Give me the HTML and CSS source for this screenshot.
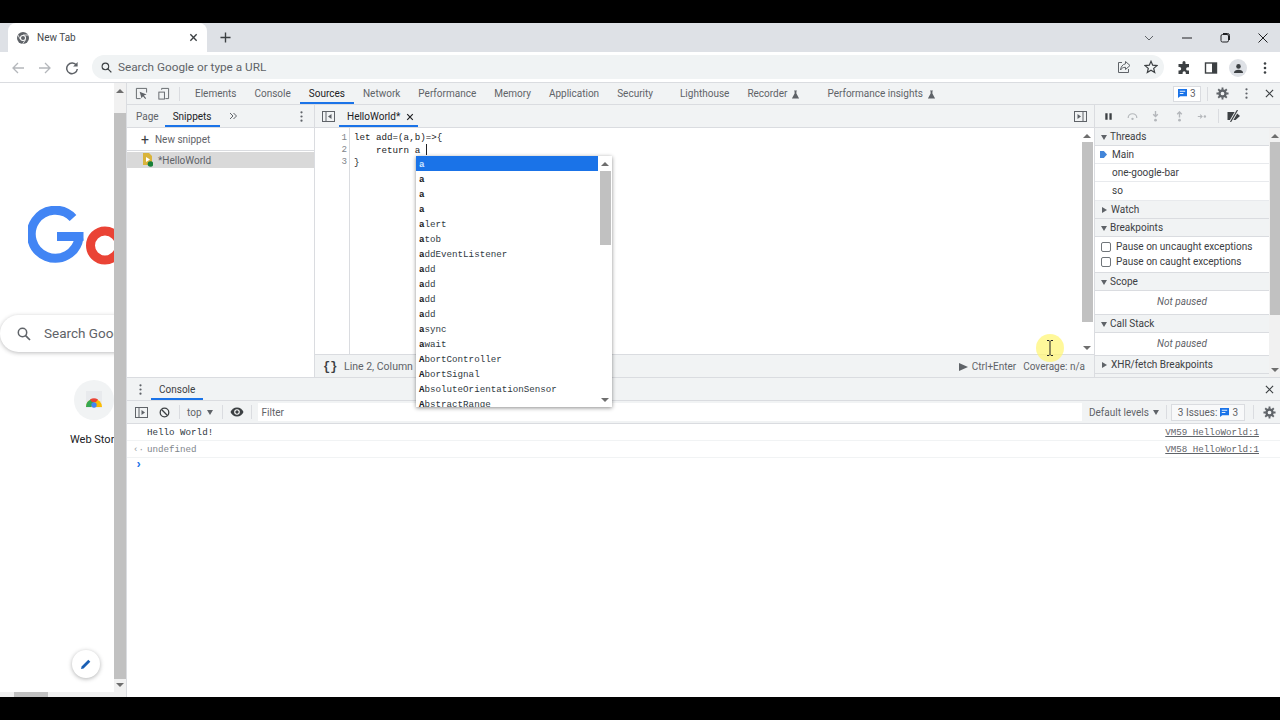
FILE: index.html
```html
<!DOCTYPE html>
<html lang="en">

<head>
  <meta charset="utf-8">
  <title>New Tab</title>
  <link rel="stylesheet" href="styles.css">
</head>

<body>
  <div class="screen">
    <!-- browser chrome -->
    <div class="tabstrip">
      <div class="tab">
        <svg class="favicon" viewBox="0 0 12 12"><circle cx="6" cy="6" r="6" fill="#5f6368"/><circle cx="6" cy="6" r="3" fill="#fff"/><circle cx="6" cy="6" r="2" fill="#5f6368"/><path d="M6 3h5.4M3.4 7.5 .9 3M8.6 7.5 5.6 12" stroke="#fff" stroke-width=".8"/></svg>
        <span class="tab-title">New Tab</span>
        <svg class="tab-close" viewBox="0 0 10 10"><path d="M1.5 1.5l7 7M8.5 1.5l-7 7" stroke="#3c4043" stroke-width="1.5"/></svg>
      </div>
      <svg class="new-tab" viewBox="0 0 12 12"><path d="M6 .5v11M.5 6h11" stroke="#3c4043" stroke-width="1.5"/></svg>
      <div class="win-btns">
        <svg viewBox="0 0 12 12"><path d="M2 4l4 4 4-4" fill="none" stroke="#5f6368"/></svg>
        <svg viewBox="0 0 12 12"><path d="M1 6h10" stroke="#202124"/></svg>
        <svg viewBox="0 0 12 12"><rect x="2" y="2.5" width="7.5" height="7.5" rx="1.5" fill="none" stroke="#202124"/><path d="M4 1.5h4.5a2 2 0 0 1 2 2V8" fill="none" stroke="#202124"/></svg>
        <svg viewBox="0 0 12 12"><path d="M1.5 1.5l9 9M10.5 1.5l-9 9" stroke="#202124"/></svg>
      </div>
    </div>

    <div class="toolbar">
      <svg class="nav-icon" viewBox="0 0 14 14"><path d="M13 7H2M7 2 2 7l5 5" fill="none" stroke="#b4b7bb" stroke-width="1.3"/></svg>
      <svg class="nav-icon" viewBox="0 0 14 14"><path d="M1 7h11M7 2l5 5-5 5" fill="none" stroke="#b4b7bb" stroke-width="1.3"/></svg>
      <svg class="nav-icon" viewBox="0 0 14 14"><path d="M11.5 4.5A5.3 5.3 0 1 0 12.3 8" fill="none" stroke="#5f6368" stroke-width="1.5"/><path d="M12.6 1v4.5H8.1z" fill="#5f6368"/></svg>
      <div class="omnibox">
        <svg class="omni-search" viewBox="0 0 12 12"><circle cx="4.8" cy="4.8" r="3.6" fill="none" stroke="#3c4043" stroke-width="1.2"/><path d="M7.5 7.5l3.8 3.8" stroke="#3c4043" stroke-width="1.4"/></svg>
        <span class="omni-text">Search Google or type a URL</span>
        <svg class="omni-share" viewBox="0 0 14 14"><path d="M5 2.5H1.500v10h10V9" fill="none" stroke="#5f6368"/><path d="M8.5 1.5 13 5.5 8.5 9.5V7.3C6 7.3 4.5 8.3 3.5 10 3.8 7 5.5 4.3 8.5 3.8z" fill="none" stroke="#5f6368"/></svg>
        <svg class="omni-star" viewBox="0 0 14 14"><path d="M7 1.3 8.7 5.200l4.200.4-3.200 2.800 1 4.100L7 10.300 3.300 12.500l1-4.100L1.100 5.600l4.200-.4z" fill="none" stroke="#3c4043" stroke-width="1.2"/></svg>
      </div>
      <div class="browser-actions">
        <svg viewBox="0 0 14 14"><path d="M5.500 1.500a1.500 1.500 0 0 1 3 0V3H12v3.300h-1.300a1.600 1.600 0 0 0 0 3.200H12V13H8.800v-1.200a1.600 1.600 0 0 0-3.200 0V13H1.500V9.500h1a1.700 1.700 0 0 0 0-3.400h-1V3h4z" fill="#3c4043"/></svg>
        <svg viewBox="0 0 14 14"><rect x="1.5" y="2" width="11" height="10" fill="none" stroke="#3c4043" stroke-width="1.4"/><rect x="8" y="2" width="4.5" height="10" fill="#3c4043"/></svg>
        <span class="avatar"><svg viewBox="0 0 12 12"><circle cx="6" cy="3.7" r="2.5" fill="#3c4043"/><path d="M1 11c0-2.600 2.500-3.700 5-3.700S11 8.400 11 11z" fill="#3c4043"/></svg></span>
        <svg viewBox="0 0 14 14"><circle cx="7" cy="2.5" r="1.3" fill="#3c4043"/><circle cx="7" cy="7" r="1.3" fill="#3c4043"/><circle cx="7" cy="11.5" r="1.3" fill="#3c4043"/></svg>
      </div>
    </div>

    <div class="viewport">
      <!-- new tab page, squeezed by devtools -->
      <div class="page">
        <div class="page-body">
          <svg class="google-logo" viewBox="0 0 86 60"><path d="M45 12A24 24 0 1 0 51 32" fill="none" stroke="#4285f4" stroke-width="9"/><rect x="29" y="26" width="26.5" height="9" fill="#4285f4"/><circle cx="77" cy="39.5" r="14.5" fill="none" stroke="#ea4335" stroke-width="9"/></svg>
          <div class="realbox">
            <svg viewBox="0 0 14 14"><circle cx="5.5" cy="5.5" r="4.2" fill="none" stroke="#5f6368" stroke-width="1.5"/><path d="M8.6 8.6l4.4 4.4" stroke="#5f6368" stroke-width="1.7"/></svg>
            <span>Search Google or type a URL</span>
          </div>
          <div class="shortcut">
            <span class="shortcut-icon">
              <svg viewBox="0 0 20 20"><rect x="2" y="1" width="16" height="17" fill="#e8eaed"/><path d="M2 17a8 8 0 0 1 16 0z" fill="#fbbc04"/><path d="M2 17a8 8 0 0 1 5-7.4L10 12l-3 5z" fill="#34a853"/><path d="M6 9.5a8 8 0 0 1 8 0l-2 2.5H8z" fill="#ea4335"/><circle cx="10" cy="15" r="2.7" fill="#4285f4"/></svg>
            </span>
            <span class="shortcut-label">Web Store</span>
          </div>
          <span class="edit-btn"><svg viewBox="0 0 12 12"><path d="M1 11l.6-2.600L8.300 1.700l2 2L3.600 10.400z" fill="#1a5fb4"/></svg></span>
        </div>
        <div class="page-hbar"><span></span></div>
      </div>
      <div class="page-scroll">
        <i class="arrow-up"></i>
        <span class="page-thumb"></span>
        <i class="arrow-down"></i>
      </div>

      <!-- devtools -->
      <div class="devtools">
        <div class="dt-tabs">
          <svg class="dt-icon" viewBox="0 0 14 14"><path d="M6 12.5H1.5v-11h11V6" fill="none" stroke="#5f6368"/><path d="M5 5l7.500 3-3 1.200 2.500 3-1 .8-2.400-3L7 12z" fill="#5f6368"/></svg>
          <svg class="dt-icon" viewBox="0 0 14 14"><path d="M5 3V1.5h7.5v11H9" fill="none" stroke="#5f6368"/><rect x="2" y="5.5" width="6" height="7.5" fill="none" stroke="#5f6368"/></svg>
          <span class="dt-sep"></span>
          <nav class="dt-panels">
            <span class="panel">Elements</span>
            <span class="panel">Console</span>
            <span class="panel active">Sources</span>
            <span class="panel">Network</span>
            <span class="panel">Performance</span>
            <span class="panel">Memory</span>
            <span class="panel">Application</span>
            <span class="panel wide">Security</span>
            <span class="panel">Lighthouse</span>
            <span class="panel wide">Recorder <svg class="flask" viewBox="0 0 10 10"><path d="M3.500 .5h3v1h-.5v2.500L9 9.500H1L4 4V1.500h-.5z" fill="#5f6368"/></svg></span>
            <span class="panel">Performance insights <svg class="flask" viewBox="0 0 10 10"><path d="M3.500 .5h3v1h-.5v2.500L9 9.500H1L4 4V1.500h-.5z" fill="#5f6368"/></svg></span>
          </nav>
          <span class="issue-badge"><svg class="msg-icon" viewBox="0 0 10 10"><path d="M0 0h10v8H2.500L0 10z" fill="#1a73e8"/><path d="M2 2.500h6M2 5h4" stroke="#fff"/></svg>3</span>
          <span class="dt-sep"></span>
          <svg class="dt-icon gear" viewBox="0 0 14 14"><circle cx="7" cy="7" r="3.3" fill="none" stroke="#5f6368" stroke-width="2.6"/><path d="M7 .5v13M.5 7h13M2.400 2.400l9.200 9.200M11.600 2.400l-9.200 9.200" stroke="#5f6368" stroke-width="2" stroke-dasharray="2.5 8 2.5"/></svg>
          <svg class="dt-icon dots" viewBox="0 0 14 14"><circle cx="7" cy="2.5" r="1.2" fill="#5f6368"/><circle cx="7" cy="7" r="1.2" fill="#5f6368"/><circle cx="7" cy="11.5" r="1.2" fill="#5f6368"/></svg>
          <svg class="dt-icon close" viewBox="0 0 10 10"><path d="M1 1l8 8M9 1 1 9" stroke="#3c4043" stroke-width="1.3"/></svg>
        </div>

        <div class="dt-body">
          <div class="navigator">
            <div class="subtabs">
              <span class="subtab">Page</span>
              <span class="subtab active">Snippets</span>
              <svg class="more-tabs" viewBox="0 0 8 8"><path d="M1 1l3 3-3 3M4.500 1l3 3-3 3" fill="none" stroke="#5f6368"/></svg>
              <svg class="dt-icon sub-dots" viewBox="0 0 14 14"><circle cx="7" cy="2.5" r="1.2" fill="#5f6368"/><circle cx="7" cy="7" r="1.2" fill="#5f6368"/><circle cx="7" cy="11.5" r="1.2" fill="#5f6368"/></svg>
            </div>
            <div class="new-snippet"><span class="plus">+</span> New snippet</div>
            <div class="snippet-row">
              <svg class="snippet-icon" viewBox="0 0 10 14"><path d="M0 0h6l3 3v9H0z" fill="#d9b43c"/><path d="M3 4l4 2.500L3 9z" fill="#fff"/><circle cx="7.5" cy="11" r="2.8" fill="#188038"/></svg>
              <span>*HelloWorld</span>
            </div>
          </div>

          <div class="editor">
            <div class="subtabs editor-tabs">
              <svg class="pane-toggle" viewBox="0 0 13 13"><rect x=".5" y="1.5" width="12" height="10" fill="none" stroke="#5f6368"/><path d="M4 1.5v10" stroke="#5f6368"/><path d="M9.500 4v5L6 6.500z" fill="#5f6368"/></svg>
              <span class="file-tab">HelloWorld* <svg viewBox="0 0 10 10"><path d="M1.5 1.5l7 7M8.5 1.5l-7 7" stroke="#202124" stroke-width="1.5"/></svg></span>
              <svg class="pane-toggle right" viewBox="0 0 13 13"><rect x=".5" y="1.5" width="12" height="10" fill="none" stroke="#5f6368"/><path d="M9 1.5v10" stroke="#5f6368"/><path d="M3.500 4v5L7 6.500z" fill="#5f6368"/></svg>
            </div>
            <div class="editor-main">
              <div class="gutter">
                <div>1</div>
                <div>2</div>
                <div>3</div>
              </div>
              <pre class="code"><span>let add=(a,b)=&gt;{</span>
<span>    return a <i class="caret"></i></span>
<span>}</span></pre>
              <div class="scrollbar editor-bar">
                <i class="arrow-up"></i>
                <span class="thumb"></span>
                <i class="arrow-down"></i>
              </div>
            </div>
            <div class="editor-foot">
              <span class="braces">{}</span>
              <span class="foot-pos">Line 2, Column 11</span>
              <span class="run-tri"></span>
              <span>Ctrl+Enter</span>
              <span class="coverage">Coverage: n/a</span>
            </div>
          </div>

          <div class="debugger">
            <div class="subtabs debug-tools">
              <svg viewBox="0 0 12 12"><path d="M2.500 2.500h2.500v7H2.500zM7 2.500h2.500v7H7z" fill="#3c4043"/></svg>
              <svg viewBox="0 0 14 12"><path d="M1.500 8a5.500 5.500 0 0 1 11 0" fill="none" stroke="#b4b7bb" stroke-width="1.5"/><circle cx="7" cy="9" r="1.5" fill="#b4b7bb"/></svg>
              <svg viewBox="0 0 12 12"><path d="M6 0v5M3.500 3.500 6 6l2.500-2.500" fill="none" stroke="#b4b7bb" stroke-width="1.5"/><circle cx="6" cy="10" r="1.5" fill="#b4b7bb"/></svg>
              <svg viewBox="0 0 12 12"><path d="M6 7V1.500M3.500 3.500 6 1l2.500 2.500" fill="none" stroke="#b4b7bb" stroke-width="1.5"/><circle cx="6" cy="10" r="1.5" fill="#b4b7bb"/></svg>
              <svg viewBox="0 0 14 12"><path d="M1 6h5M4 3.500 6.500 6 4 8.500" fill="none" stroke="#b4b7bb" stroke-width="1.3"/><circle cx="10" cy="6" r="1.5" fill="#b4b7bb"/></svg>
              <span class="dt-sep"></span>
              <svg class="bp-off" viewBox="0 0 16 12"><path d="M1 2h8l4.500 4L9 10H1z" fill="#3c4043"/><path d="M11 0 4 12" stroke="#f1f3f4" stroke-width="3"/><path d="M11 0 4 12" stroke="#3c4043" stroke-width="1.2"/></svg>
            </div>
            <div class="debug-scroll">
              <div class="debug-panes">
                <div class="sec-head"><i class="tri-open"></i>Threads</div>
                <div class="thread current">Main</div>
                <div class="thread">one-google-bar</div>
                <div class="thread last">so</div>
                <div class="sec-head"><i class="tri-closed"></i>Watch</div>
                <div class="sec-head"><i class="tri-open"></i>Breakpoints</div>
                <div class="checks">
                  <label><i class="box"></i>Pause on uncaught exceptions</label>
                  <label><i class="box"></i>Pause on caught exceptions</label>
                </div>
                <div class="sec-head"><i class="tri-open"></i>Scope</div>
                <div class="not-paused tall">Not paused</div>
                <div class="sec-head"><i class="tri-open"></i>Call Stack</div>
                <div class="not-paused">Not paused</div>
                <div class="sec-head"><i class="tri-closed"></i>XHR/fetch Breakpoints</div>
              </div>
              <div class="scrollbar debug-bar">
                <i class="arrow-up"></i>
                <span class="thumb"></span>
                <i class="arrow-down"></i>
              </div>
            </div>
          </div>
        </div>

        <!-- console drawer -->
        <div class="drawer">
          <div class="drawer-tabs">
            <svg class="dt-icon" viewBox="0 0 14 14"><circle cx="7" cy="2.5" r="1.2" fill="#5f6368"/><circle cx="7" cy="7" r="1.2" fill="#5f6368"/><circle cx="7" cy="11.5" r="1.2" fill="#5f6368"/></svg>
            <span class="drawer-tab">Console</span>
            <svg class="dt-icon close" viewBox="0 0 10 10"><path d="M1 1l8 8M9 1 1 9" stroke="#3c4043" stroke-width="1.3"/></svg>
          </div>
          <div class="console-bar">
            <svg class="pane-toggle" viewBox="0 0 13 13"><rect x=".5" y="1.5" width="12" height="10" fill="none" stroke="#5f6368"/><path d="M4 1.5v10" stroke="#5f6368"/><path d="M6.500 4v5L10 6.500z" fill="#5f6368"/></svg>
            <svg class="dt-icon clear" viewBox="0 0 12 12"><circle cx="6" cy="6" r="4.7" fill="none" stroke="#3c4043" stroke-width="1.4"/><path d="M2.800 2.800l6.400 6.400" stroke="#3c4043" stroke-width="1.4"/></svg>
            <span class="dt-sep"></span>
            <span class="ctx">top <i class="caret-down"></i></span>
            <span class="dt-sep"></span>
            <svg class="dt-icon eye" viewBox="0 0 14 10"><path d="M7 .5C4 .5 1.500 2.500.5 5c1 2.500 3.500 4.500 6.500 4.500S12.500 7.500 13.500 5C12.500 2.500 10 .5 7 .5z" fill="#3c4043"/><circle cx="7" cy="5" r="2.8" fill="#fff"/><circle cx="7" cy="5" r="1.7" fill="#3c4043"/></svg>
            <span class="dt-sep"></span>
            <span class="filter">Filter</span>
            <span class="levels">Default levels <i class="caret-down"></i></span>
            <span class="dt-sep"></span>
            <span class="issues">3 Issues: <svg class="msg-icon" viewBox="0 0 10 10"><path d="M0 0h10v8H2.500L0 10z" fill="#1a73e8"/><path d="M2 2.500h6M2 5h4" stroke="#fff"/></svg> 3</span>
            <span class="dt-sep"></span>
            <svg class="dt-icon gear" viewBox="0 0 14 14"><circle cx="7" cy="7" r="3.3" fill="none" stroke="#5f6368" stroke-width="2.6"/><path d="M7 .5v13M.5 7h13M2.400 2.400l9.200 9.200M11.600 2.400l-9.200 9.200" stroke="#5f6368" stroke-width="2" stroke-dasharray="2.5 8 2.5"/></svg>
          </div>
          <div class="messages">
            <div class="msg"><span>Hello World!</span><a class="src">VM59 HelloWorld:1</a></div>
            <div class="msg result"><i class="ret">‹·</i><span>undefined</span><a class="src">VM58 HelloWorld:1</a></div>
            <div class="prompt">›</div>
          </div>
        </div>
      </div>
    </div>

    <!-- autocomplete popup over the editor -->
    <div class="suggest">
      <ul class="suggest-list">
        <li class="selected"><b>a</b></li>
        <li><b>a</b></li>
        <li><b>a</b></li>
        <li><b>a</b></li>
        <li><b>a</b>lert</li>
        <li><b>a</b>tob</li>
        <li><b>a</b>ddEventListener</li>
        <li><b>a</b>dd</li>
        <li><b>a</b>dd</li>
        <li><b>a</b>dd</li>
        <li><b>a</b>dd</li>
        <li><b>a</b>sync</li>
        <li><b>a</b>wait</li>
        <li><b>A</b>bortController</li>
        <li><b>A</b>bortSignal</li>
        <li><b>A</b>bsoluteOrientationSensor</li>
        <li><b>A</b>bstractRange</li>
      </ul>
      <div class="scrollbar suggest-bar">
        <i class="arrow-up"></i>
        <span class="thumb"></span>
        <i class="arrow-down"></i>
      </div>
    </div>

    <!-- recording cursor highlight -->
    <div class="cursor-spot"><svg viewBox="0 0 8 16"><path d="M1 .5h2l1 1 1-1h2M4 1.500v13M1 15.500h2l1-1 1 1h2" fill="none" stroke="#202124"/></svg></div>
  </div>
</body>

</html>
```

FILE: styles.css
```css
* {
  box-sizing: border-box;
}

html,
body {
  margin: 0;
  height: 100%;
  overflow: hidden;
  background: #000;
}

body {
  font: 10px/1.2 Roboto, "Liberation Sans", sans-serif;
  color: #202124;
}

i {
  font-style: normal;
}

svg {
  display: block;
  flex: none;
}

.screen {
  position: relative;
  display: flex;
  flex-direction: column;
  width: 1280px;
  height: 720px;
  padding: 23px 0;
}

/* tab strip */

.tabstrip {
  display: flex;
  align-items: center;
  height: 29px;
  padding-left: 8px;
  background: #dee1e6;
}

.tab {
  display: flex;
  align-items: center;
  align-self: flex-end;
  width: 199px;
  height: 29px;
  padding: 0 9px;
  background: #fff;
  border-radius: 8px 8px 0 0;
}

.favicon {
  width: 12px;
  height: 12px;
}

.tab-title {
  flex: 1;
  margin-left: 8px;
  padding-top: 1px;
  color: #45494d;
}

.tab-close {
  width: 9px;
  height: 9px;
}

.new-tab {
  width: 11px;
  height: 11px;
  margin-left: 13px;
}

.win-btns {
  display: flex;
  gap: 26px;
  margin-left: auto;
  padding-right: 11px;
}

.win-btns svg {
  width: 12px;
  height: 12px;
}

/* toolbar */

.toolbar {
  display: flex;
  align-items: center;
  height: 31px;
  padding: 2px 0 0 11px;
  background: #fff;
  border-bottom: 1px solid #dadce0;
}

.nav-icon {
  width: 14px;
  height: 14px;
  margin-right: 13px;
}

.omnibox {
  display: flex;
  align-items: center;
  width: 1072px;
  height: 24px;
  margin-bottom: 2px;
  padding: 0 6px 0 9px;
  background: #f0f3f4;
  border-radius: 12px;
}

.omni-search {
  width: 11px;
  height: 11px;
}

.omni-text {
  flex: 1;
  margin-left: 6px;
  font-size: 11.75px;
  color: #5f6368;
}

.omni-share {
  width: 14px;
  height: 14px;
  margin-right: 13px;
}

.omni-star {
  width: 14px;
  height: 14px;
}

.browser-actions {
  display: flex;
  align-items: center;
  gap: 13px;
  margin-left: 13px;
}

.browser-actions svg {
  width: 14px;
  height: 14px;
}

.avatar {
  display: flex;
  align-items: center;
  justify-content: center;
  width: 18px;
  height: 18px;
  margin: 0 -2px;
  background: #dee1e6;
  border-radius: 50%;
}

.avatar svg {
  width: 11px;
  height: 11px;
}

/* page under devtools */

.viewport {
  display: flex;
  flex: 1;
  min-height: 0;
  background: #fff;
}

.page {
  display: flex;
  flex-direction: column;
  width: 114px;
  overflow: hidden;
}

.page-body {
  display: flex;
  flex: 1;
  flex-direction: column;
  padding-top: 123px;
  overflow: hidden;
}

.google-logo {
  width: 86px;
  height: 60px;
  margin-left: 28px;
}

.realbox {
  display: flex;
  align-items: center;
  flex: none;
  width: 300px;
  height: 37px;
  margin-top: 49px;
  padding-left: 17px;
  font-size: 13.5px;
  color: #5f6368;
  white-space: nowrap;
  background: #fff;
  border-radius: 19px;
  box-shadow: 0 1px 4px rgba(32, 33, 36, .3);
}

.realbox svg {
  width: 14px;
  height: 14px;
  margin-right: 13px;
}

.shortcut {
  flex: none;
  width: 80px;
  margin: 28px 0 0 70px;
}

.shortcut-icon {
  display: flex;
  align-items: center;
  justify-content: center;
  width: 40px;
  height: 40px;
  margin-left: 4px;
  background: #f1f3f4;
  border-radius: 50%;
}

.shortcut-icon svg {
  width: 20px;
  height: 20px;
}

.shortcut-label {
  display: block;
  margin-top: 13px;
  font-size: 11px;
  color: #202124;
  white-space: nowrap;
}

.edit-btn {
  display: flex;
  align-items: center;
  justify-content: center;
  align-self: flex-end;
  flex: none;
  width: 28px;
  height: 28px;
  margin: auto 14px 14px 0;
  background: #fff;
  border-radius: 50%;
  box-shadow: 0 1px 4px rgba(32, 33, 36, .35);
}

.edit-btn svg {
  width: 12px;
  height: 12px;
}

.page-hbar {
  flex: none;
  height: 5px;
  padding-left: 14px;
  background: #f1f1f1;
}

.page-hbar span {
  display: block;
  width: 34px;
  height: 5px;
  background: #c1c1c1;
}

.page-scroll {
  display: flex;
  flex-direction: column;
  align-items: center;
  width: 13px;
  padding-right: 1px;
  background: #f1f1f1;
  border-right: 1px solid #dadce0;
}

.page-thumb {
  flex: 1;
  width: 12px;
  margin-top: 20px;
  background: #c1c1c1;
}

.arrow-up,
.arrow-down {
  flex: none;
  width: 0;
  height: 0;
  border-left: 4px solid transparent;
  border-right: 4px solid transparent;
}

.arrow-up {
  margin-top: 6px;
  border-bottom: 4px solid #6e6e6e;
}

.arrow-down {
  margin: 4px 0 10px;
  border-top: 4px solid #6e6e6e;
}

/* devtools */

.devtools {
  display: flex;
  flex: 1;
  flex-direction: column;
  min-width: 0;
}

.dt-tabs {
  display: flex;
  align-items: center;
  flex: none;
  height: 22px;
  padding-left: 8px;
  background: #f1f3f4;
  border-bottom: 1px solid #dadce0;
}

.dt-icon {
  width: 13px;
  height: 13px;
  margin-right: 9px;
}

.dt-sep {
  flex: none;
  width: 1px;
  height: 14px;
  background: #dadce0;
}

.dt-panels {
  display: flex;
  flex: 1;
  align-items: stretch;
  height: 100%;
  margin-left: 6px;
}

.panel {
  display: flex;
  align-items: center;
  padding: 1px 9px 0;
  color: #5f6368;
  white-space: nowrap;
}

.panel.wide {
  padding-right: 18px;
}

.panel.active {
  padding-top: 3px;
  color: #202124;
  border-bottom: 2px solid #1a73e8;
}

.flask {
  width: 9px;
  height: 9px;
  margin-left: 4px;
}

.issue-badge {
  display: flex;
  align-items: center;
  gap: 3px;
  height: 16px;
  margin-right: 6px;
  padding: 0 4px;
  color: #5f6368;
  background: #fff;
  border: 1px solid #dadce0;
}

.msg-icon {
  width: 9px;
  height: 9px;
}

.gear {
  width: 13px;
  height: 13px;
  margin: 0 11px 0 8px;
}

.dots {
  margin-right: 12.5px;
}

.close {
  width: 9px;
  height: 9px;
  margin-right: 6px;
}

.dt-body {
  display: flex;
  flex: none;
  height: 272px;
}

.subtabs {
  display: flex;
  align-items: stretch;
  flex: none;
  height: 23px;
  padding-left: 9px;
  background: #f1f3f4;
  border-bottom: 1px solid #dadce0;
}

.navigator {
  flex: none;
  width: 188px;
  background: #fff;
  border-right: 1px solid #dadce0;
}

.subtab {
  display: flex;
  align-items: center;
  padding: 1px 6px 0 0;
  color: #5f6368;
}

.subtab.active {
  padding: 3px 9px 0 8px;
  color: #202124;
  border-bottom: 2px solid #1a73e8;
}

.more-tabs {
  align-self: center;
  width: 8px;
  height: 8px;
  margin-left: 9px;
}

.sub-dots {
  align-self: center;
  margin: 0 6px 0 auto;
}

.new-snippet {
  display: flex;
  align-items: center;
  height: 23px;
  padding: 1px 0 0 14px;
  color: #5f6368;
  border-bottom: 1px solid #dadce0;
}

.plus {
  margin-right: 6px;
  font-size: 14px;
  line-height: 1;
  color: #3c4043;
}

.snippet-row {
  display: flex;
  align-items: center;
  height: 16px;
  margin-top: 1px;
  padding-left: 16px;
  color: #5f6368;
  background: #d9d9d9;
}

.snippet-row span {
  padding-top: 1px;
}

.snippet-icon {
  width: 10px;
  height: 14px;
  margin-right: 5px;
}

.editor {
  display: flex;
  flex: 1;
  flex-direction: column;
  min-width: 0;
  background: #fff;
  border-right: 1px solid #dadce0;
}

.editor-tabs {
  padding-left: 7px;
}

.pane-toggle {
  align-self: center;
  width: 13px;
  height: 13px;
}

.pane-toggle.right {
  margin: 0 7px 0 auto;
}

.file-tab {
  display: flex;
  align-items: center;
  gap: 6px;
  margin-left: 4px;
  padding: 3px 4px 0 8px;
  color: #202124;
  border-bottom: 2px solid #1a73e8;
}

.file-tab svg {
  width: 8px;
  height: 8px;
}

.editor-main {
  display: flex;
  flex: 1;
  min-height: 0;
}

.gutter {
  flex: none;
  width: 35px;
  padding: 4px 2px 0 0;
  font: 9.2px/12px "Liberation Mono", monospace;
  color: #80868b;
  text-align: right;
  border-right: 1px solid #dadce0;
}

.code {
  flex: 1;
  margin: 0;
  padding: 4px 0 0 4px;
  font: 9.2px/12px "Liberation Mono", monospace;
  color: #202124;
}

.caret {
  display: inline-block;
  width: 1px;
  height: 11px;
  vertical-align: -2px;
  background: #202124;
}

.scrollbar {
  display: flex;
  flex-direction: column;
  align-items: center;
  flex: none;
  background: #f1f1f1;
}

.scrollbar .thumb {
  background: #c1c1c1;
}

.editor-bar {
  width: 14px;
  background: #fff;
}

.editor-bar .thumb {
  width: 11px;
  height: 180px;
  margin-top: 4px;
}

.editor-bar .arrow-down {
  margin: auto 0 4px;
}

.editor-foot {
  display: flex;
  align-items: center;
  flex: none;
  height: 23px;
  padding: 2px 9px 0 8px;
  color: #5f6368;
  background: #f1f3f4;
  border-top: 1px solid #dadce0;
}

.braces {
  width: 21px;
  font: bold 12px "Liberation Mono", monospace;
  color: #3c4043;
}

.foot-pos {
  margin-right: auto;
  font-size: 10.5px;
}

.run-tri {
  width: 0;
  height: 0;
  margin-right: 4px;
  border-top: 4px solid transparent;
  border-bottom: 4px solid transparent;
  border-left: 9px solid #5f6368;
}

.coverage {
  margin-left: 7px;
}

.debugger {
  display: flex;
  flex: none;
  flex-direction: column;
  width: 185px;
  background: #f1f3f4;
}

.debug-tools {
  align-items: center;
  gap: 12.5px;
  padding-left: 8px;
}

.debug-tools svg {
  width: 11px;
  height: 11px;
}

.debug-tools .dt-sep {
  margin: 0 -5px 0 -3px;
}

.debug-tools .bp-off {
  width: 17px;
  height: 12px;
}

.debug-scroll {
  display: flex;
  flex: 1;
  min-height: 0;
}

.debug-panes {
  flex: 1;
  min-width: 0;
}

.debug-bar {
  width: 11px;
}

.debug-bar .thumb {
  width: 10px;
  height: 173px;
  margin-top: 4px;
}

.debug-bar .arrow-down {
  margin: auto 0 5px;
}

.sec-head {
  display: flex;
  align-items: center;
  height: 18px;
  padding: 1px 0 0 6px;
  color: #3c4043;
  background: #f1f3f4;
  border-bottom: 1px solid #dadce0;
}

.tri-open,
.tri-closed {
  flex: none;
  width: 0;
  height: 0;
  margin-right: 3px;
}

.tri-open {
  border-left: 3.5px solid transparent;
  border-right: 3.5px solid transparent;
  border-top: 5px solid #5f6368;
}

.tri-closed {
  margin-left: 1px;
  margin-right: 4px;
  border-top: 3.5px solid transparent;
  border-bottom: 3.5px solid transparent;
  border-left: 5px solid #5f6368;
}

.thread {
  display: flex;
  align-items: center;
  height: 18px;
  padding: 1px 0 0 17px;
  color: #3c4043;
  background: #fff;
  border-bottom: 1px solid #e8eaed;
}

.thread.last {
  height: 19px;
  padding-bottom: 1px;
}

.thread.current {
  position: relative;
}

.thread.current::before {
  content: "";
  position: absolute;
  left: 5px;
  top: 5px;
  width: 7px;
  height: 7px;
  background: #4285d9;
  clip-path: polygon(0 0, 55% 0, 100% 50%, 55% 100%, 0 100%);
}

.checks {
  display: flex;
  flex-direction: column;
  justify-content: center;
  gap: 3px;
  height: 36px;
  padding: 0 0 2px 6px;
  background: #fff;
  border-bottom: 1px solid #dadce0;
}

.checks label {
  display: flex;
  align-items: center;
  height: 12px;
  padding-top: 1px;
  color: #3c4043;
}

.box {
  width: 10px;
  height: 10px;
  margin-right: 5px;
  border: 1px solid #70757a;
  border-radius: 2px;
}

.not-paused {
  display: flex;
  align-items: center;
  justify-content: center;
  height: 23px;
  padding-bottom: 1px;
  font-style: italic;
  color: #5f6368;
  background: #fff;
  border-bottom: 1px solid #dadce0;
}

.not-paused.tall {
  height: 24px;
}

/* drawer */

.drawer {
  display: flex;
  flex: 1;
  flex-direction: column;
  min-height: 0;
  background: #fff;
  border-top: 1px solid #dadce0;
}

.drawer-tabs {
  display: flex;
  align-items: stretch;
  flex: none;
  height: 23px;
  padding-left: 7px;
  background: #f1f3f4;
  border-bottom: 1px solid #dadce0;
}

.drawer-tabs svg {
  align-self: center;
}

.drawer-tabs .close {
  margin-left: auto;
}

.drawer-tab {
  display: flex;
  align-items: center;
  margin-left: -5px;
  padding: 3px 8px 0;
  color: #3c4043;
  border-bottom: 2px solid #1a73e8;
}

.console-bar {
  display: flex;
  align-items: center;
  flex: none;
  height: 23px;
  padding-left: 8px;
  color: #5f6368;
  background: #f1f3f4;
  border-bottom: 1px solid #dadce0;
}

.clear {
  width: 11px;
  height: 11px;
  margin: 0 9px 0 11px;
}

.ctx {
  display: flex;
  align-items: center;
  gap: 5px;
  margin: 1px 9px 0 7px;
}

.caret-down {
  width: 0;
  height: 0;
  border-left: 3.5px solid transparent;
  border-right: 3.5px solid transparent;
  border-top: 5px solid #5f6368;
}

.eye {
  width: 14px;
  height: 10px;
  margin: 0 7px;
}

.filter {
  flex: 1;
  align-self: stretch;
  margin: 2px 7px 2px 6px;
  padding: 4px 4px 0;
  color: #5f6368;
  background: #fff;
}

.levels {
  display: flex;
  align-items: center;
  gap: 4px;
  margin: 1px 7px 0 0;
}

.issues {
  display: flex;
  align-items: center;
  gap: 3px;
  height: 17px;
  margin: 0 8px 0 4px;
  padding: 1px 6px 0;
  background: #f8f9fa;
  border: 1px solid #dadce0;
}

.console-bar .gear {
  margin: 0 4px 0 9px;
}

.messages {
  flex: 1;
  font: 9.2px/12px "Liberation Mono", monospace;
}

.msg {
  display: flex;
  align-items: center;
  height: 17px;
  padding: 1px 21px 0 20px;
  color: #303942;
  border-bottom: 1px solid #f1f3f4;
}

.msg.result {
  position: relative;
  color: #80868b;
}

.ret {
  position: absolute;
  left: 6px;
  color: #9aa0a6;
}

.src {
  margin-left: auto;
  color: #5f6368;
  text-decoration: underline;
}

.prompt {
  padding: 1px 0 0 8px;
  font-size: 12px;
  font-weight: bold;
  color: #1a73e8;
}

/* autocomplete */

.suggest {
  position: absolute;
  left: 416px;
  top: 156px;
  display: flex;
  width: 196px;
  height: 251px;
  overflow: hidden;
  background: #fff;
  box-shadow: 0 1px 4px rgba(0, 0, 0, .45);
}

.suggest-list {
  flex: 1;
  margin: 0;
  padding: 0;
  list-style: none;
  font: 9.2px/17px "Liberation Mono", monospace;
  color: #303942;
}

.suggest-list li {
  height: 15px;
  padding-left: 3px;
}

.suggest-list b {
  color: #202124;
}

.suggest-list .selected {
  color: #fff;
  background: #1a73e8;
}

.suggest-list .selected b {
  color: #cde4ff;
}

.suggest-bar {
  width: 14px;
  background: #fff;
}

.suggest-bar .thumb {
  width: 11px;
  height: 74px;
  margin-top: 5px;
}

.suggest-bar .arrow-down {
  margin: auto 0 5px;
}

/* cursor highlight */

.cursor-spot {
  position: absolute;
  left: 1036px;
  top: 334px;
  display: flex;
  align-items: center;
  justify-content: center;
  width: 28px;
  height: 28px;
  background: rgba(255, 245, 120, .75);
  border-radius: 50%;
}

.cursor-spot svg {
  width: 8px;
  height: 16px;
}
```
